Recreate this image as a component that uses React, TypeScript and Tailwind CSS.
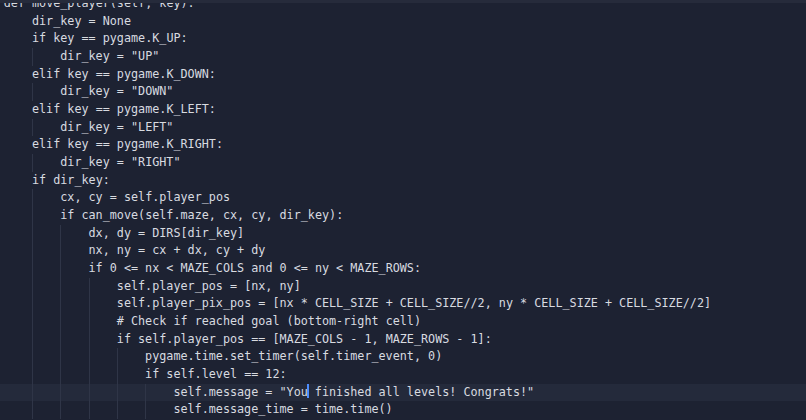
import React from "react";

const lines: [number, string][] = [
  [0, "def move_player(self, key):"],
  [1, "dir_key = None"],
  [1, "if key == pygame.K_UP:"],
  [2, 'dir_key = "UP"'],
  [1, "elif key == pygame.K_DOWN:"],
  [2, 'dir_key = "DOWN"'],
  [1, "elif key == pygame.K_LEFT:"],
  [2, 'dir_key = "LEFT"'],
  [1, "elif key == pygame.K_RIGHT:"],
  [2, 'dir_key = "RIGHT"'],
  [1, "if dir_key:"],
  [2, "cx, cy = self.player_pos"],
  [2, "if can_move(self.maze, cx, cy, dir_key):"],
  [3, "dx, dy = DIRS[dir_key]"],
  [3, "nx, ny = cx + dx, cy + dy"],
  [3, "if 0 <= nx < MAZE_COLS and 0 <= ny < MAZE_ROWS:"],
  [4, "self.player_pos = [nx, ny]"],
  [4, "self.player_pix_pos = [nx * CELL_SIZE + CELL_SIZE//2, ny * CELL_SIZE + CELL_SIZE//2]"],
  [4, "# Check if reached goal (bottom-right cell)"],
  [4, "if self.player_pos == [MAZE_COLS - 1, MAZE_ROWS - 1]:"],
  [5, "pygame.time.set_timer(self.timer_event, 0)"],
  [5, "if self.level == 12:"],
  [6, 'self.message = "You finished all levels! Congrats!"'],
  [6, "self.message_time = time.time()"],
];

const ACTIVE = 22;

const CodeLine = ({ indent, text, active }: { indent: number; text: string; active: boolean }) => {
  const guides = Array.from({ length: indent });
  return (
    <div className={`flex h-[17.68px] items-center pl-[3.7px] ${active ? "bg-[#242a3b]" : ""}`}>
      {guides.map((_, i) => (
        <span
          key={i}
          className={`box-border h-full w-[4ch] shrink-0 ${i > 0 ? "border-l border-[#2f3547]" : ""}`}
        />
      ))}
      {active ? (
        <span className="whitespace-pre">
          {text.slice(0, 19)}
          <span className="relative">
            <span className="absolute -left-px top-[-1px] h-[14px] w-[2px] bg-[#4d8dff]" />
          </span>
          {text.slice(19)}
        </span>
      ) : (
        <span className="whitespace-pre">{text}</span>
      )}
    </div>
  );
};

export default function App() {
  return (
    <div className="h-[420px] w-[806px] overflow-hidden border-t-[3px] border-[#262b3b] bg-[#1d2232]">
      <div
        className="-mt-[8px] text-[11.75px] text-[#d8dbe0]"
        style={{ fontFamily: '"DejaVu Sans Mono", "Liberation Mono", monospace' }}
      >
        {lines.map(([indent, text], i) => (
          <CodeLine key={i} indent={indent} text={text} active={i === ACTIVE} />
        ))}
      </div>
    </div>
  );
}
